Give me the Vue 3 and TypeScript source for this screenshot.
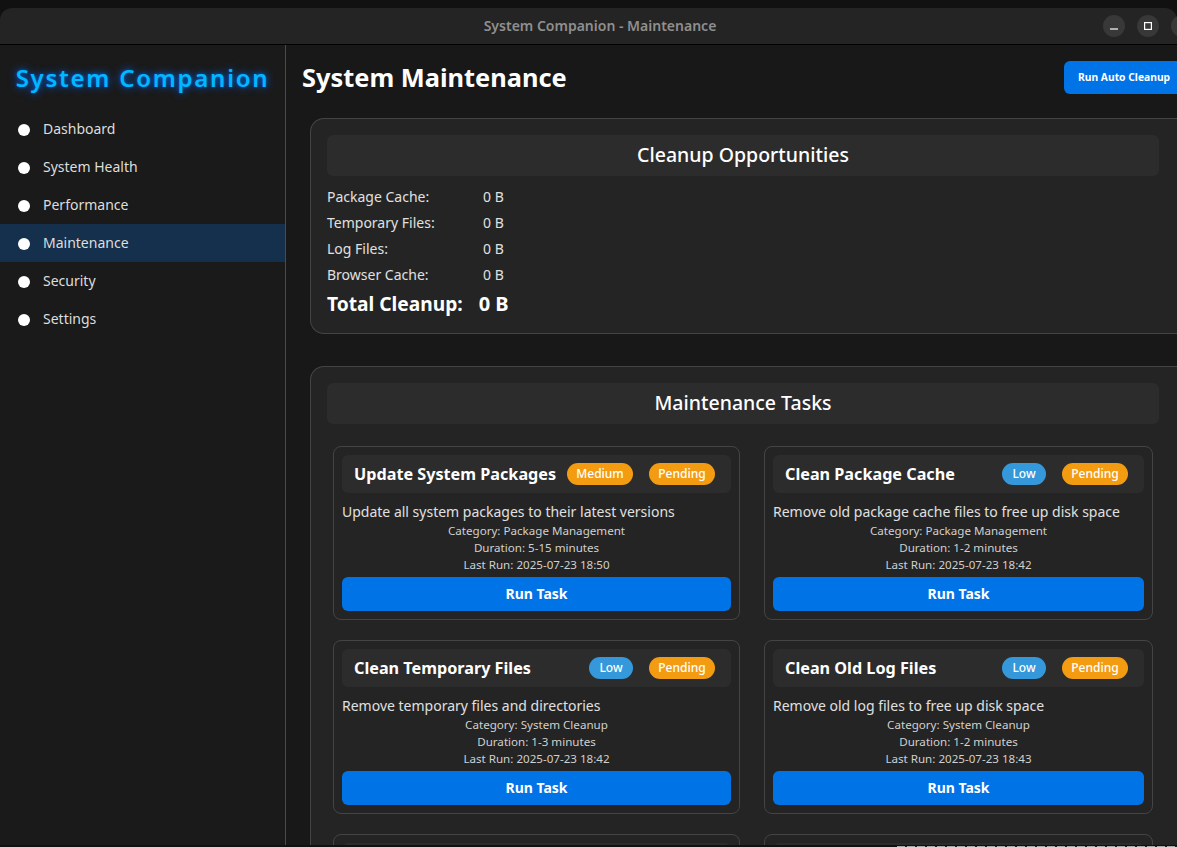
<template>
  <div class="window">
    <!-- Barra de titulo -->
    <header class="titlebar">
      <span class="titlebar-text">System Companion - Maintenance</span>
      <div class="window-buttons">
        <button type="button" class="win-btn">
          <svg width="10" height="10" viewBox="0 0 10 10"><path d="M1 8h8" stroke="#fff" stroke-width="1.2" fill="none" /></svg>
        </button>
        <button type="button" class="win-btn">
          <svg width="10" height="10" viewBox="0 0 10 10"><rect x="1.6" y="1.6" width="6.8" height="6.8" stroke="#fff" stroke-width="1.2" fill="none" /></svg>
        </button>
        <button type="button" class="win-btn" />
      </div>
    </header>

    <div class="body-row">
      <aside class="sidebar">
        <div class="logo">System Companion</div>
        <nav class="nav">
          <a
            v-for="item in navItems"
            :key="item"
            class="nav-item"
            :class="{ active: item === 'Maintenance' }"
          >
            <span class="dot" />
            <span class="nav-label">{{ item }}</span>
          </a>
        </nav>
      </aside>

      <main class="content">
        <div class="page-header">
          <h1>System Maintenance</h1>
          <button type="button" class="btn-auto">Run Auto Cleanup</button>
        </div>

        <section class="panel cleanup-panel">
          <h2 class="panel-title">Cleanup Opportunities</h2>
          <div class="cleanup-list">
            <div v-for="row in cleanupRows" :key="row" class="cleanup-row">
              <span class="cleanup-label">{{ row }}:</span>
              <span>0 B</span>
            </div>
            <div class="cleanup-total">
              <span class="total-label">Total Cleanup:</span>
              <span>0 B</span>
            </div>
          </div>
        </section>

        <section class="panel tasks-panel">
          <h2 class="panel-title">Maintenance Tasks</h2>
          <div class="tasks-grid">
            <article v-for="t in tasks" :key="t.name" class="task-card">
              <div class="task-head">
                <span class="task-name">{{ t.name }}</span>
                <span class="badges">
                  <span class="badge" :class="t.priority.toLowerCase()">{{ t.priority }}</span>
                  <span class="badge pending">Pending</span>
                </span>
              </div>
              <p class="task-desc">{{ t.desc }}</p>
              <div class="task-meta">Category: {{ t.category }}</div>
              <div class="task-meta">Duration: {{ t.duration }}</div>
              <div class="task-meta">Last Run: {{ t.lastRun }}</div>
              <button type="button" class="btn-run">Run Task</button>
            </article>
            <!-- Proxima linha, cortada pela borda da janela -->
            <article v-for="n in 2" :key="n" class="task-card">
              <div class="task-head" />
            </article>
          </div>
        </section>
      </main>
    </div>

    <!-- Faixa quadriculada na borda inferior -->
    <div class="bottom-strip" />
  </div>
</template>

<script setup lang="ts">
interface Task {
  name: string
  priority: string
  desc: string
  category: string
  duration: string
  lastRun: string
}

const navItems: string[] = ['Dashboard', 'System Health', 'Performance', 'Maintenance', 'Security', 'Settings']
const cleanupRows: string[] = ['Package Cache', 'Temporary Files', 'Log Files', 'Browser Cache']

const tasks: Task[] = [
  {
    name: 'Update System Packages',
    priority: 'Medium',
    desc: 'Update all system packages to their latest versions',
    category: 'Package Management',
    duration: '5-15 minutes',
    lastRun: '2025-07-23 18:50',
  },
  {
    name: 'Clean Package Cache',
    priority: 'Low',
    desc: 'Remove old package cache files to free up disk space',
    category: 'Package Management',
    duration: '1-2 minutes',
    lastRun: '2025-07-23 18:42',
  },
  {
    name: 'Clean Temporary Files',
    priority: 'Low',
    desc: 'Remove temporary files and directories',
    category: 'System Cleanup',
    duration: '1-3 minutes',
    lastRun: '2025-07-23 18:42',
  },
  {
    name: 'Clean Old Log Files',
    priority: 'Low',
    desc: 'Remove old log files to free up disk space',
    category: 'System Cleanup',
    duration: '1-2 minutes',
    lastRun: '2025-07-23 18:43',
  },
]
</script>

<style>
html,
body {
  margin: 0;
  background: #111111;
  overflow: hidden;
}
</style>

<style scoped>
.window {
  height: 847px;
  box-sizing: border-box;
  padding: 8px 0 2px;
  display: flex;
  flex-direction: column;
  overflow: hidden;
  position: relative;
  font-family: 'Noto Sans', 'Open Sans', sans-serif;
  color: #ffffff;
}

.titlebar {
  flex: none;
  height: 34px;
  background: #242424;
  border-bottom: 1px solid #000000;
  border-radius: 12px 12px 0 0;
  display: flex;
  align-items: center;
  justify-content: center;
  position: relative;
  padding: 0 0 2px 23px;
}

.titlebar-text {
  font-size: 14px;
  font-weight: 600;
  color: #8f8f8f;
}

.window-buttons {
  position: absolute;
  top: 7px;
  left: 1103px;
  display: flex;
  gap: 12px;
}

.win-btn {
  width: 22px;
  height: 22px;
  padding: 0;
  border: none;
  border-radius: 50%;
  background: #383838;
  display: flex;
  align-items: center;
  justify-content: center;
}

.body-row {
  flex: 1;
  min-height: 0;
  display: flex;
}

.sidebar {
  flex: none;
  width: 285px;
  background: #1a1a1a;
  border-right: 1px solid #4a4a4a;
}

.logo {
  margin-top: 16px;
  text-align: center;
  font-size: 24px;
  font-weight: 600;
  letter-spacing: 1.75px;
  color: #00b8ff;
  text-shadow: 0 0 8px rgba(0, 110, 255, 0.95), 0 0 3px rgba(0, 110, 255, 0.6);
  line-height: 34px;
}

.nav {
  margin-top: 15px;
}

.nav-item {
  height: 38px;
  display: flex;
  align-items: center;
  gap: 13px;
  padding-left: 18px;
  font-size: 14px;
  color: #dddddd;
}

.nav-item.active {
  background: #15304d;
}

.nav-label {
  padding-bottom: 1px;
}

.dot {
  width: 12px;
  height: 12px;
  margin-top: 2px;
  border-radius: 50%;
  background: #ffffff;
}

.content {
  flex: 1;
  min-width: 0;
  background: #181818;
  padding: 0 0 0 24px;
  overflow: hidden;
}

.page-header {
  display: flex;
  align-items: center;
  justify-content: space-between;
  height: 66px;
}

.page-header h1 {
  margin: 0 0 0 -8px;
  padding-bottom: 3px;
  font-size: 25.4px;
  font-weight: 700;
}

.btn-auto {
  width: 113px;
  height: 33px;
  border: none;
  border-radius: 6px 0 0 6px;
  background: #0073e6;
  color: #ffffff;
  font-family: inherit;
  font-size: 10.3px;
  font-weight: 700;
  text-align: left;
  padding: 0 0 2px 14px;
  margin-top: -1px;
}

.panel {
  background: #242424;
  border: 1px solid #444444;
  border-right: none;
  border-radius: 14px 0 0 14px;
  padding: 16px 18px 16px 16px;
}

.cleanup-panel {
  height: 216px;
  box-sizing: border-box;
  margin: 7px 0 32px;
}

.panel-title {
  margin: 0;
  height: 41px;
  line-height: 39px;
  background: #2c2c2c;
  border-radius: 6px;
  text-align: center;
  font-size: 19.5px;
  font-weight: 500;
}

.cleanup-list {
  margin-top: 7px;
  font-size: 14px;
  color: #e0e0e0;
}

.cleanup-row {
  display: flex;
  height: 26px;
  align-items: center;
}

.cleanup-label {
  width: 156px;
}

.cleanup-total {
  display: flex;
  align-items: center;
  height: 32px;
  font-size: 20px;
  font-weight: 700;
  color: #ffffff;
  gap: 16px;
}

.total-label {
  font-size: 19.2px;
}

.tasks-grid {
  display: grid;
  grid-template-columns: 407px 389px;
  gap: 20px 24px;
  margin: 22px 0 0 6px;
}

.task-card {
  box-sizing: border-box;
  height: 174px;
  border: 1px solid #444444;
  border-radius: 8px;
  padding: 8px;
  text-align: center;
  display: flex;
  flex-direction: column;
}

.task-head {
  flex: none;
  height: 38px;
  background: #2c2c2c;
  border-radius: 6px;
  display: flex;
  align-items: center;
  justify-content: space-between;
  padding: 0 16px 0 12px;
}

.task-name {
  font-size: 16.2px;
  font-weight: 700;
}

.badges {
  display: flex;
  gap: 16px;
}

.badge {
  height: 22px;
  line-height: 21px;
  min-width: 44px;
  box-sizing: border-box;
  padding: 0 10px;
  border-radius: 11px;
  font-size: 12px;
  font-weight: 500;
  color: #ffffff;
  text-align: center;
}

.badge.medium,
.badge.pending {
  width: 66px;
  padding: 0;
  background: #f39c12;
}

.badge.low {
  background: #3498db;
}

.task-desc {
  margin: 9px 0 1px;
  text-align: left;
  font-size: 14px;
  line-height: 19px;
  color: #e0e0e0;
}

.task-meta {
  font-size: 11.6px;
  line-height: 17px;
  color: #d0d0d0;
}

.btn-run {
  margin-top: 4px;
  height: 34px;
  flex: none;
  border: none;
  border-radius: 6px;
  background: #0073e6;
  color: #ffffff;
  font-family: inherit;
  font-size: 14px;
  font-weight: 700;
  padding: 0 0 2px;
}

.bottom-strip {
  position: absolute;
  left: 897px;
  right: 0;
  bottom: 0;
  height: 1px;
  background: repeating-linear-gradient(90deg, #a8a8a8 0 8px, #222222 8px 10px);
}
</style>
